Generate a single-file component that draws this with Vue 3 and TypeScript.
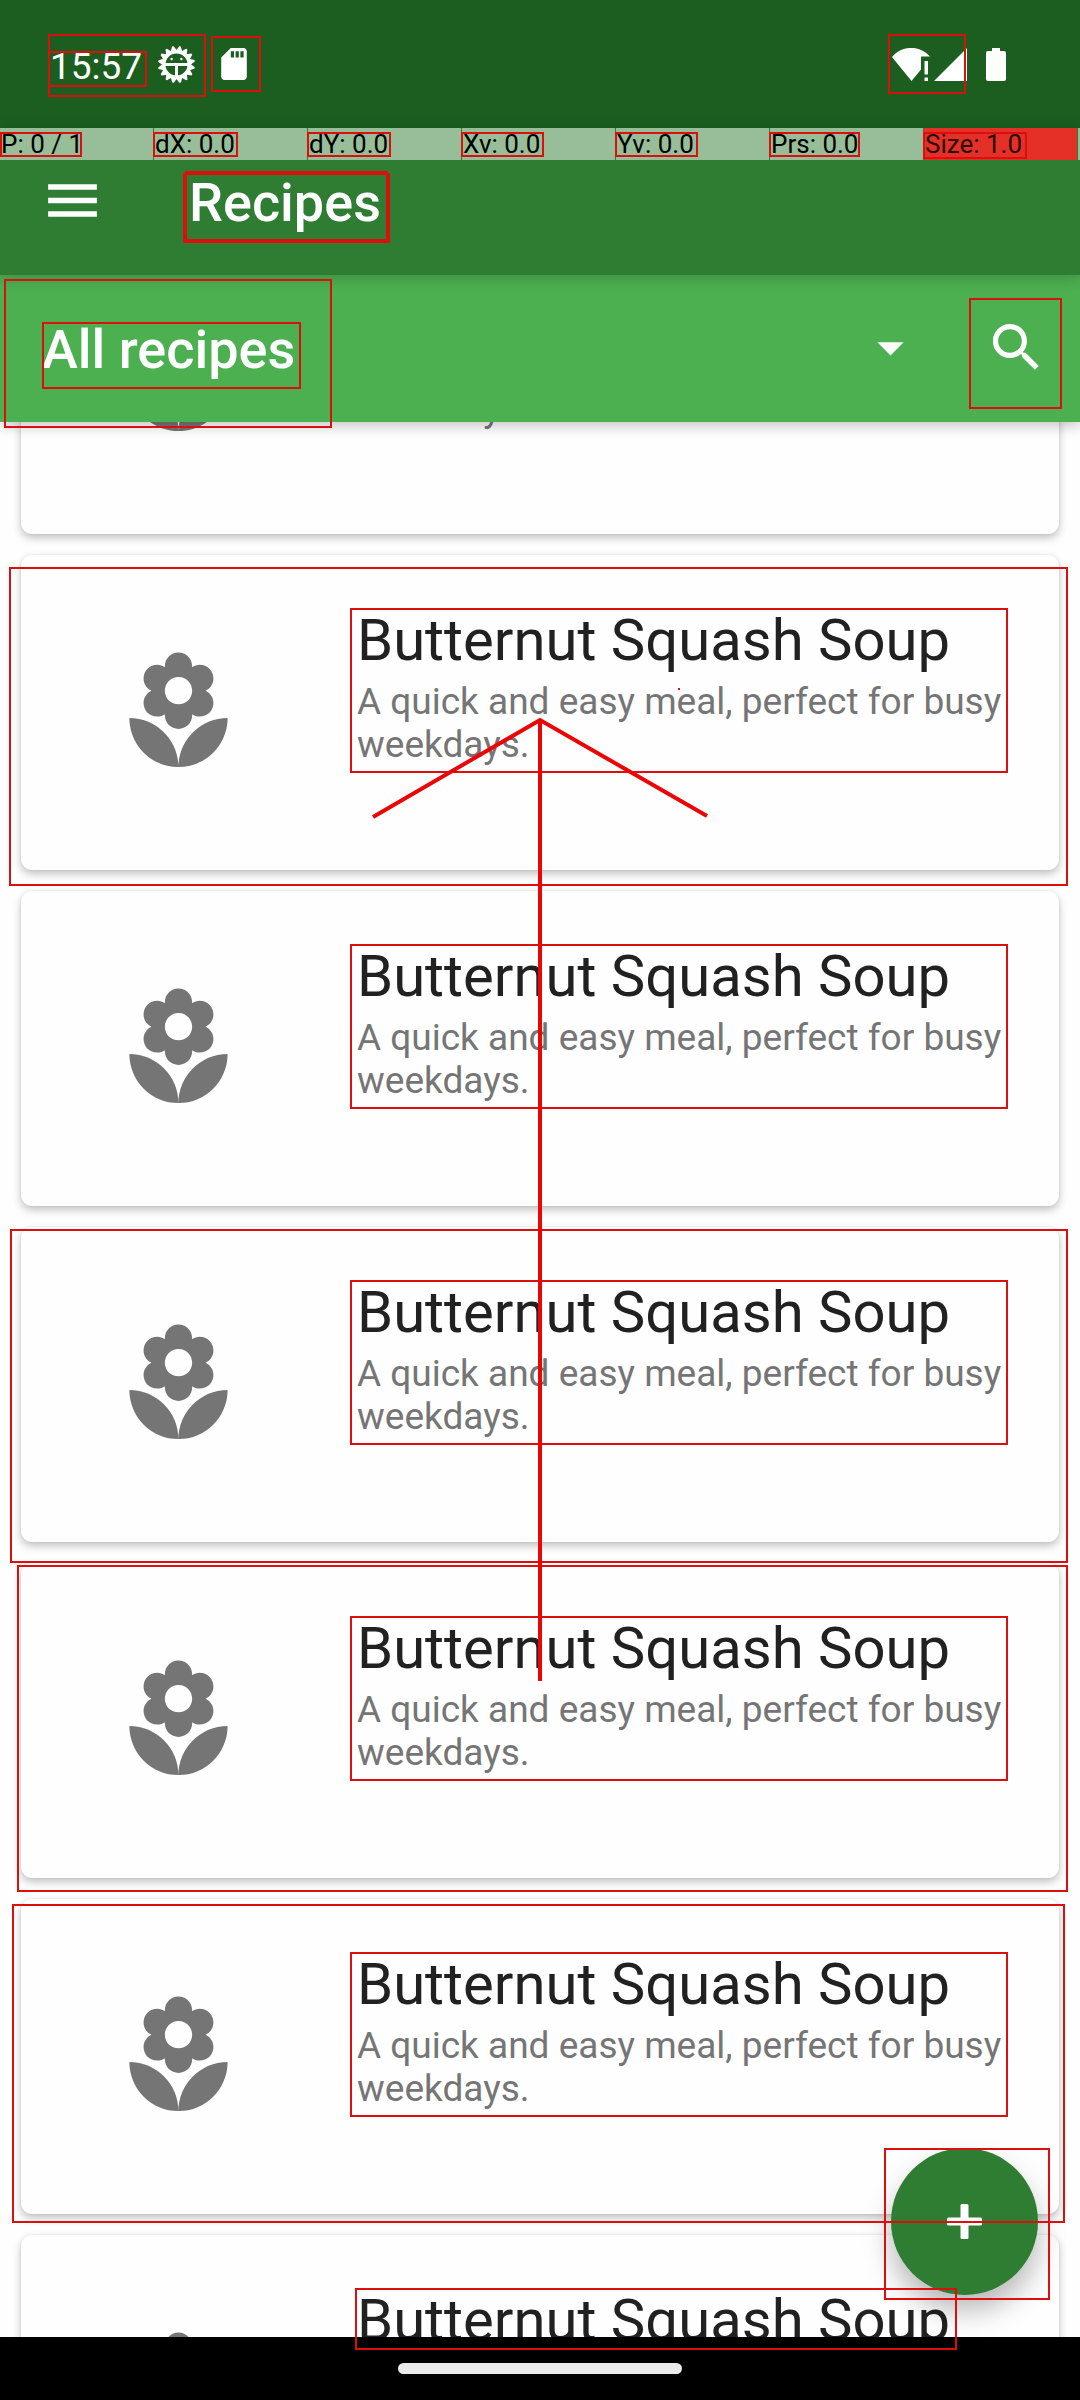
<script setup lang="ts">
interface Recipe {
  id: number
  title: string
  description: string
}

interface Bounds {
  x1: number
  y1: number
  x2: number
  y2: number
}

const recipes: Recipe[] = Array.from({ length: 7 }, (_, id) => ({
  id,
  title: 'Butternut Squash Soup',
  description: 'A quick and easy meal, perfect for busy weekdays.',
}))

const readings: string[] = ['P: 0 / 1', 'dX: 0.0', 'dY: 0.0', 'Xv: 0.0', 'Yv: 0.0', 'Prs: 0.0', 'Size: 1.0']

const box = (x1: number, y1: number, x2: number, y2: number): Bounds => ({ x1, y1, x2, y2 })

// Detected view bounds, in screen coordinates
const bounds: Bounds[] = [
  box(48, 34, 206, 97),
  box(48, 51, 147, 87),
  box(211, 36, 261, 92),
  box(888, 34, 966, 94),
  box(0, 132, 82, 157),
  box(153, 132, 238, 157),
  box(307, 132, 391, 157),
  box(461, 132, 544, 157),
  box(615, 132, 698, 157),
  box(769, 132, 860, 157),
  box(923, 132, 1027, 159),
  box(183, 173, 390, 243),
  box(185, 171, 388, 241),
  box(4, 279, 332, 428),
  box(42, 322, 301, 389),
  box(969, 298, 1062, 409),
  box(9, 567, 1068, 886),
  box(10, 1229, 1068, 1563),
  box(17, 1565, 1068, 1892),
  box(12, 1904, 1065, 2223),
  box(350, 608, 1008, 773),
  box(350, 944, 1008, 1109),
  box(350, 1280, 1008, 1445),
  box(350, 1616, 1008, 1781),
  box(350, 1952, 1008, 2117),
  box(355, 2288, 957, 2350),
  box(884, 2148, 1050, 2300),
]

const teeth: number[] = Array.from({ length: 16 }, (_, i) => i * 22.5)
</script>

<template>
  <div class="screen">
    <div class="status">
      <span class="clock">15:57</span>
      <svg class="gear" viewBox="0 0 37 37" aria-hidden="true">
        <g fill="#fff">
          <path v-for="a in teeth" :key="a" d="M15 5.500 17.700 0h1.600L22 5.500z" :transform="`rotate(${a + 11} 18.5 18.5)`" />
        </g>
        <circle cx="18.5" cy="18.5" r="12.800" fill="none" stroke="#fff" stroke-width="3.500" />
        <path d="M6 18.5h25M18.5 19v13" stroke="#fff" stroke-width="3" />
        <circle cx="13.6" cy="13" r="1.2" fill="#fff" />
        <circle cx="23.4" cy="13" r="1.2" fill="#fff" />
      </svg>
      <svg class="sd" viewBox="4 2 16 20" aria-hidden="true">
        <path fill="#fff" d="M18 2h-8L4.02 8 4 20c0 1.1.9 2 2 2h12c1.1 0 2-.9 2-2V4c0-1.1-.9-2-2-2zm-6 6h-2V4h2v4zm3 0h-2V4h2v4zm3 0h-2V4h2v4z" />
      </svg>
      <svg class="network" viewBox="0 0 75 33" aria-hidden="true">
        <path fill="#fff" d="M0 9C10-3 28-3 38 8.500H29V21.500L19.500 33zM32.500 13h3.500v13.500h-3.500zM32.500 29.500h3.500V33h-3.500zM75 0V33H42z" />
      </svg>
      <svg class="battery" viewBox="0 0 20 33" aria-hidden="true">
        <path fill="#fff" d="M6 0h8v3h4q2 0 2 2v26q0 2-2 2H2q-2 0-2-2V5q0-2 2-2h4z" />
      </svg>
    </div>

    <header class="appbar">
      <button class="icon-button" aria-label="Open menu">
        <svg class="menu" viewBox="0 0 24 24" aria-hidden="true">
          <path fill="#fff" d="M3 18h18v-2H3v2zm0-5h18v-2H3v2zm0-7v2h18V6H3z" />
        </svg>
      </button>
      <h1>Recipes</h1>
      <div class="pointer">
        <span v-for="r in readings" :key="r" class="cell" :class="{ hot: r.startsWith('Size') }">{{ r }}</span>
        <span class="cell tail"></span>
      </div>
    </header>

    <div class="filter">
      <div class="picker">
        <select aria-label="Recipe category">
          <option>All recipes</option>
        </select>
        <svg class="glyph caret" viewBox="0 0 24 24" aria-hidden="true"><path fill="#fff" d="M7 10l5 5 5-5z" /></svg>
      </div>
      <button class="icon-button" aria-label="Search">
        <svg class="glyph" viewBox="0 0 24 24" aria-hidden="true">
          <path fill="#fff" d="M15.500 14h-.79l-.28-.27C15.410 12.590 16 11.110 16 9.500 16 5.910 13.090 3 9.500 3S3 5.910 3 9.500 5.910 16 9.500 16c1.610 0 3.090-.59 4.230-1.570l.27.28v.79l5 4.990L20.490 19l-4.990-5zm-6 0C7.010 14 5 11.990 5 9.500S7.010 5 9.500 5 14 7.010 14 9.500 11.990 14 9.500 14z" />
        </svg>
      </button>
    </div>

    <main>
      <ul class="list">
        <li v-for="recipe in recipes" :key="recipe.id" class="card">
          <div class="thumb">
            <svg viewBox="0 0 24 24" aria-hidden="true">
              <path fill="#757575" d="M12 22c4.970 0 9-4.030 9-9-4.970 0-9 4.030-9 9zM5.600 10.250c0 1.380 1.120 2.500 2.500 2.500.53 0 1.010-.16 1.420-.44l-.02.19c0 1.380 1.120 2.500 2.500 2.500s2.500-1.120 2.500-2.500l-.02-.19c.4.28.89.44 1.420.44 1.380 0 2.500-1.120 2.500-2.500 0-1-.59-1.850-1.430-2.250.84-.4 1.430-1.250 1.430-2.250 0-1.380-1.120-2.500-2.500-2.500-.53 0-1.010.16-1.420.44l.02-.19C14.500 2.120 13.380 1 12 1S9.500 2.120 9.500 3.500l.02.19c-.4-.28-.89-.44-1.420-.44-1.380 0-2.500 1.120-2.500 2.500 0 1 .59 1.850 1.430 2.250-.84.4-1.430 1.250-1.430 2.250zM12 5.500c1.380 0 2.500 1.120 2.500 2.500s-1.120 2.500-2.500 2.500S9.500 9.380 9.500 8s1.120-2.500 2.500-2.500zM3 13c0 4.970 4.030 9 9 9 0-4.970-4.030-9-9-9z" />
            </svg>
          </div>
          <div class="body">
            <h2>{{ recipe.title }}</h2>
            <p>{{ recipe.description }}</p>
          </div>
        </li>
      </ul>
      <button class="fab" aria-label="Add recipe">
        <svg viewBox="0 0 35 35" aria-hidden="true">
          <rect x="13.500" width="8" height="35" rx="1.500" fill="#fff" />
          <rect y="13.500" width="35" height="8" rx="1.500" fill="#fff" />
        </svg>
      </button>
    </main>

    <div class="nav"><span class="pill"></span></div>

    <svg class="overlay" aria-hidden="true">
      <rect
        v-for="(b, i) in bounds"
        :key="i"
        :x="b.x1 + 1"
        :y="b.y1 + 1"
        :width="b.x2 - b.x1 - 2"
        :height="b.y2 - b.y1 - 2"
        fill="none"
        stroke="#dc0f0f"
        stroke-width="2"
      />
      <rect x="678" y="688" width="2" height="2" fill="#dc0f0f" />
      <path d="M540 1681V720M373 817 540 720 707 816" fill="none" stroke="#eb0606" stroke-width="4" />
    </svg>
  </div>
</template>

<style>
body {
  margin: 0;
}
</style>

<style scoped>
.screen {
  position: relative;
  display: flex;
  flex-direction: column;
  height: 100vh;
  overflow: hidden;
  background: #fefefe;
  font-family: Roboto, "Liberation Sans", sans-serif;
}
h1, h2, p, ul {
  margin: 0;
  padding: 0;
  font-weight: 400;
}
button {
  border: 0;
  padding: 0;
  background: none;
}
svg {
  display: block;
}
.status {
  display: flex;
  align-items: center;
  flex: none;
  box-sizing: border-box;
  height: 128px;
  padding: 0 74px 0 50px;
  background: #1b5e20;
  color: #fff;
}
.clock {
  padding-top: 4px;
  font-size: 37px;
  line-height: 43px;
}
.gear {
  width: 37px;
  height: 37px;
  margin-left: 16px;
}
.sd {
  width: 26px;
  height: 32px;
  margin-left: 26px;
}
.network {
  width: 75px;
  height: 33px;
  margin-left: auto;
}
.battery {
  width: 20px;
  height: 33px;
  margin-left: 19px;
}
.appbar {
  position: relative;
  z-index: 3;
  display: flex;
  align-items: center;
  flex: none;
  gap: 84px;
  box-sizing: border-box;
  height: 147px;
  padding: 0 0 2px 40px;
  background: #2e7d32;
  box-shadow: 0 3px 14px rgba(0, 0, 0, 0.2);
}
.menu {
  width: 65px;
  height: 65px;
}
h1 {
  padding-top: 4px;
  color: #fff;
  font-size: 54px;
  font-weight: 500;
  line-height: 62px;
}
.pointer {
  position: absolute;
  top: 0;
  left: 0;
  right: 0;
  display: flex;
  gap: 1px;
  height: 32px;
}
.cell {
  flex: none;
  box-sizing: border-box;
  width: 153px;
  padding-left: 1px;
  background: rgba(255, 255, 255, 0.5);
  color: #000;
  font-size: 26px;
  line-height: 32px;
}
.hot {
  background: #e53027;
  color: #2b0a0a;
}
.tail {
  flex: 1;
  width: auto;
}
.filter {
  position: relative;
  z-index: 2;
  display: flex;
  align-items: center;
  flex: none;
  gap: 63px;
  box-sizing: border-box;
  height: 147px;
  padding: 0 32px 2px 42px;
  background: #4caf50;
  box-shadow: 0 3px 14px rgba(0, 0, 0, 0.25);
}
.picker {
  display: grid;
  flex: 1;
  align-items: center;
}
.picker > * {
  grid-area: 1 / 1;
}
select {
  appearance: none;
  margin: 0;
  padding: 4px 0 0;
  border: 0;
  background: none;
  color: #fff;
  font: 500 54px/62px Roboto, "Liberation Sans", sans-serif;
}
.glyph {
  width: 63px;
  height: 63px;
}
.caret {
  justify-self: end;
  pointer-events: none;
}
main {
  position: relative;
  flex: 1;
  min-height: 0;
  overflow: hidden;
}
.list {
  display: flex;
  flex-direction: column;
  gap: 21px;
  margin-top: -203px;
  padding: 0 21px;
  list-style: none;
}
.card {
  display: flex;
  flex: none;
  height: 315px;
  border-radius: 11px;
  background: #fefefe;
  box-shadow: 0 4px 9px rgba(0, 0, 0, 0.24), 0 0 3px rgba(0, 0, 0, 0.08);
}
.thumb {
  display: grid;
  place-items: center;
  flex: none;
  width: 315px;
}
.thumb svg {
  width: 131px;
  height: 131px;
}
.body {
  flex: 1;
  padding: 51px 42px 0 21px;
}
h2 {
  color: #212121;
  font-size: 58px;
  line-height: 68px;
}
p {
  margin-top: 6px;
  color: #757575;
  font-size: 37px;
  line-height: 43px;
}
.fab {
  position: absolute;
  right: 42px;
  bottom: 42px;
  display: grid;
  place-items: center;
  width: 147px;
  height: 147px;
  border-radius: 50%;
  background: #2e7d32;
  box-shadow: 0 16px 28px rgba(0, 0, 0, 0.28);
}
.fab svg {
  width: 35px;
  height: 35px;
}
.nav {
  position: relative;
  display: grid;
  place-items: center;
  flex: none;
  height: 63px;
  background: #000;
}
.pill {
  width: 284px;
  height: 11px;
  border-radius: 6px;
  background: #ebebeb;
}
.overlay {
  position: absolute;
  z-index: 5;
  top: 0;
  left: 0;
  width: 100%;
  height: 100%;
  pointer-events: none;
}
</style>
